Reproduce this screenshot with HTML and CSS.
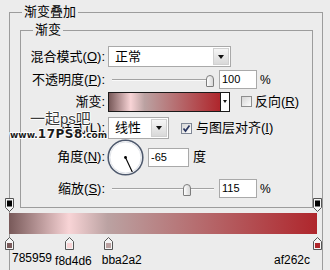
FILE: index.html
```html
<!DOCTYPE html>
<html lang="zh-CN">
<head>
    <meta charset="UTF-8">
    <title>渐变叠加</title>
    <link rel="stylesheet" href="styles.css">
</head>
<body>

    <div class="outer">
        <div class="group-title">渐变叠加</div>

        <div class="inner">
            <div class="group-title">渐变</div>

            <!-- blend mode -->
            <div class="row r1">
                <span class="label">混合模式(<u>O</u>):</span>
                <div class="select select-blend">
                    <span class="select-text">正常</span>
                    <span class="select-btn"><i class="tri"></i></span>
                </div>
            </div>

            <!-- opacity -->
            <div class="row r2">
                <span class="label">不透明度(<u>P</u>):</span>
                <div class="slider"><span class="thumb" style="left: 94px"></span></div>
                <div class="num">100</div>
                <span class="unit">%</span>
            </div>

            <!-- gradient -->
            <div class="row r3">
                <span class="label">渐变:</span>
                <div class="grad-pick">
                    <span class="swatch ramp-fill"></span>
                    <span class="pick-btn"><i class="tri small"></i></span>
                </div>
                <span class="check"></span>
                <span class="check-text">反向(<u>R</u>)</span>
            </div>

            <!-- style -->
            <div class="row r4">
                <span class="label">样式(<u>L</u>):</span>
                <div class="select select-style">
                    <span class="select-text">线性</span>
                    <span class="select-btn"><i class="tri"></i></span>
                </div>
                <span class="check checked">
                    <svg width="9" height="9" viewBox="0 0 9 9"><path d="M1.5 4.5L3.5 7L7.5 1.5" fill="none" stroke="#27335e" stroke-width="1.7"/></svg>
                </span>
                <span class="check-text">与图层对齐(<u>I</u>)</span>

                <span class="wm-top">一起ps吧</span>
                <span class="wm-url">www.<b>17PS8</b>.com</span>
            </div>

            <!-- angle -->
            <div class="row r5">
                <span class="label">角度(<u>N</u>):</span>
                <svg class="dial" width="37" height="37" viewBox="0 0 37 37">
                    <circle cx="18.5" cy="18.5" r="17.3" fill="#fff" stroke="#4f5a6e" stroke-width="1.6"/>
                    <circle cx="18.5" cy="18.5" r="15.6" fill="none" stroke="#dfe2e8"/>
                    <line x1="18.5" y1="18.5" x2="25.3" y2="33" stroke="#000" stroke-width="1.1"/>
                    <circle cx="18.5" cy="18.5" r="1.4" fill="#000"/>
                </svg>
                <div class="num num-angle">-65</div>
                <span class="unit">度</span>
            </div>

            <!-- scale -->
            <div class="row r6">
                <span class="label">缩放(<u>S</u>):</span>
                <div class="slider"><span class="thumb" style="left: 71px"></span></div>
                <div class="num">115</div>
                <span class="unit">%</span>
            </div>
        </div>

        <!-- gradient ramp -->
        <div class="ramp">
            <div class="stops">
                <span class="stop" style="left: 0%">
                    <svg width="9" height="14" viewBox="0 0 9 14"><path d="M0.5 0.5H8.5V9.5L4.5 13.5L0.5 9.5Z" fill="#f4f4f4" stroke="#555"/><rect x="2" y="2.5" width="5" height="6" fill="#000"/></svg>
                </span>
                <span class="stop" style="left: 100%">
                    <svg width="9" height="14" viewBox="0 0 9 14"><path d="M0.5 0.5H8.5V9.5L4.5 13.5L0.5 9.5Z" fill="#f4f4f4" stroke="#555"/><rect x="2" y="2.5" width="5" height="6" fill="#000"/></svg>
                </span>
            </div>
            <div class="bar ramp-fill"></div>
            <div class="stops stops-bottom">
                <span class="stop" style="left: 0%">
                    <svg width="9" height="13" viewBox="0 0 9 13"><path d="M4.5 0.5L8.5 4.5V12.5H0.5V4.5Z" fill="#f4f4f4" stroke="#555"/><rect x="2" y="6" width="5" height="5" fill="#785959"/></svg>
                </span>
                <span class="stop" style="left: 19.5%">
                    <svg width="9" height="13" viewBox="0 0 9 13"><path d="M4.5 0.5L8.5 4.5V12.5H0.5V4.5Z" fill="#f4f4f4" stroke="#555"/><rect x="2" y="6" width="5" height="5" fill="#f8d4d6"/></svg>
                </span>
                <span class="stop" style="left: 32%">
                    <svg width="9" height="13" viewBox="0 0 9 13"><path d="M4.5 0.5L8.5 4.5V12.5H0.5V4.5Z" fill="#f4f4f4" stroke="#555"/><rect x="2" y="6" width="5" height="5" fill="#bba2a2"/></svg>
                </span>
                <span class="stop" style="left: 100%">
                    <svg width="9" height="13" viewBox="0 0 9 13"><path d="M4.5 0.5L8.5 4.5V12.5H0.5V4.5Z" fill="#f4f4f4" stroke="#555"/><rect x="2" y="6" width="5" height="5" fill="#af262c"/></svg>
                </span>
            </div>
            <div class="hex">
                <span class="h1">785959</span>
                <span class="h2">f8d4d6</span>
                <span class="h3">bba2a2</span>
                <span class="h4">af262c</span>
            </div>
        </div>
    </div>

</body>
</html>
```

FILE: styles.css
```css
body {
    margin: 0;
    height: 270px;
    overflow: hidden;
    background: #ececec;
    font-family: "Liberation Sans", "Noto Sans CJK SC", sans-serif;
    font-size: 13px;
    line-height: 16px;
    color: #000;
}
u { text-decoration-thickness: 1px; text-underline-offset: 1px; }

/* group boxes (outer one runs past the bottom of the view) */
.outer {
    width: 314px;
    height: 258px;
    margin: 12px 0 0 9px;
    border: 1px solid #9c9c9c;
    border-bottom: none;
    box-sizing: border-box;
}
.group-title {
    width: fit-content;
    margin: -9px 0 0 12px;
    padding: 0 2px;
    background: #ececec;
}
.inner {
    width: 293px;
    height: 178px;
    margin: 10px 0 0 10px;
    border: 1px solid #9c9c9c;
    box-sizing: border-box;
}

/* rows */
.row { display: flex; align-items: center; }
.r1 { height: 23px; margin-top: 7px; }
.r2 { height: 23px; }
.r3 { height: 21px; }
.r4 { height: 32px; position: relative; }
.r5 { height: 26px; }
.r6 { height: 37px; }
.label { width: 84px; flex-shrink: 0; text-align: right; }

/* select */
.select {
    display: flex;
    height: 21px;
    margin-left: 3px;
    border: 1px solid #a9a9a9;
    background: #fff;
    box-sizing: border-box;
}
.select-blend { width: 123px; }
.select-style { width: 61px; height: 22px; }
.select-text { flex: 1; padding-left: 6px; line-height: 19px; }
.select-btn {
    width: 14px;
    margin: 1px;
    border: 1px solid #d0d0d0;
    background: linear-gradient(#f6f6f6, #d9d9d9);
    display: flex;
    align-items: center;
    justify-content: center;
}
.tri {
    border-left: 3.5px solid transparent;
    border-right: 3.5px solid transparent;
    border-top: 4px solid #111;
}
.tri.small {
    border-left-width: 2.5px;
    border-right-width: 2.5px;
    border-top-width: 3px;
}

/* slider */
.slider {
    position: relative;
    width: 102px;
    height: 12px;
    margin: 3px 0 0 7px;
}
.slider::before {
    content: "";
    position: absolute;
    left: 0;
    right: 0;
    top: 4px;
    border-top: 1px solid #a3a3a3;
    border-bottom: 1px solid #fafafa;
}
.thumb {
    position: absolute;
    top: 0;
    width: 6px;
    height: 10px;
    border: 1px solid #7d7d7d;
    border-radius: 4px 4px 1px 1px;
    background: linear-gradient(to right, #fdfdfd, #d7d7d7);
}

/* number fields */
.num {
    width: 38px;
    height: 19px;
    margin-left: 5px;
    padding-left: 2px;
    border: 1px solid #a9a9a9;
    background: #fff;
    box-sizing: border-box;
    font-size: 11px;
    line-height: 17px;
}
.num-angle { width: 41px; margin-left: 4px; }
.unit { margin-left: 3px; font-size: 12px; }
.r5 .unit { margin-left: 4px; font-size: 13px; }

/* gradient picker */
.grad-pick {
    display: flex;
    width: 122px;
    height: 20px;
    margin-left: 3px;
    border: 1px solid #1a1a1a;
    box-sizing: border-box;
}
.swatch { flex: 1; }
.pick-btn {
    width: 8px;
    border-left: 1px solid #1a1a1a;
    background: #fff;
    display: flex;
    align-items: center;
    justify-content: center;
}
.ramp-fill {
    background: linear-gradient(to right, #785959 0%, #f8d4d6 19.5%, #bba2a2 32%, #af262c 100%);
}

/* checkboxes */
.check {
    width: 11px;
    height: 11px;
    margin-left: 11px;
    border: 1px solid #8e8e8e;
    box-sizing: border-box;
    background: linear-gradient(135deg, #d6d6d6, #fdfdfd);
    display: flex;
    align-items: center;
    justify-content: center;
}
.check.checked { margin-left: 12px; border-color: #7f8796; }
.check-text { margin-left: 3px; }
.r4 .check-text { margin-left: 4px; }

/* watermark over the style label */
.wm-top {
    position: absolute;
    left: 9px;
    top: -1px;
    font-size: 15px;
    line-height: 16px;
    color: #3c3c3c;
    text-shadow: 1px 0 #fff, -1px 0 #fff, 0 1px #fff, 0 -1px #fff;
}
.wm-url {
    position: absolute;
    left: -11px;
    top: 16px;
    font-family: "DejaVu Sans", sans-serif;
    font-weight: bold;
    font-size: 9px;
    line-height: 12px;
    color: #1c1c1c;
    text-shadow: 1px 0 #fff, -1px 0 #fff, 0 1px #fff, 0 -1px #fff, 1px 1px #fff, -1px -1px #fff;
}
.wm-url b { font-size: 12px; letter-spacing: 0.5px; }

/* dial */
.dial { flex-shrink: 0; margin-left: 2px; }

/* gradient ramp */
.ramp {
    width: 308px;
    margin: -10px 0 0 -1px;
}
.stops { position: relative; height: 14px; }
.stops-bottom { height: 13px; margin-top: 3px; }
.stop {
    position: absolute;
    top: 0;
    margin-left: -4px;
    line-height: 0;
}
.bar { height: 21px; margin-top: 1px; }
.hex {
    display: flex;
    align-items: flex-start;
    margin-top: 1px;
    font-size: 12px;
    line-height: 14px;
}
.h1 { margin-left: 3px; }
.h2 { margin-left: 3px; padding-top: 3px; }
.h3 { margin-left: 10px; padding-top: 2px; }
.h4 { margin: 0 7px 0 auto; padding-top: 2px; }
```
